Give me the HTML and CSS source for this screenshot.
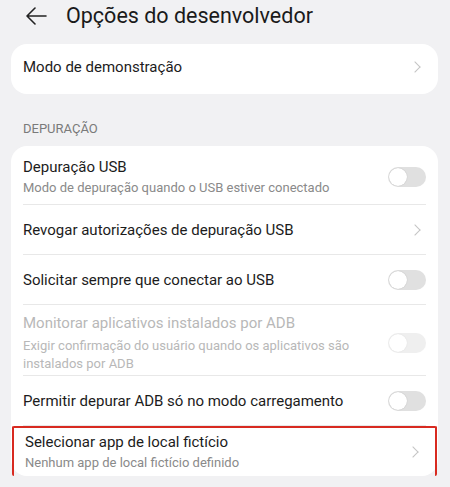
FILE: index.html
```html
<!DOCTYPE html>
<html lang="pt">
<head>
    <meta charset="UTF-8">
    <meta name="viewport" content="width=device-width, initial-scale=1.0">
    <title>Opções do desenvolvedor</title>
    <link rel="stylesheet" href="styles.css">
</head>
<body>
    <div class="top-bar">
        <svg class="back" width="22" height="18" viewBox="0 0 22 18">
            <path d="M21 9H2M10 1L2 9l8 8" fill="none" stroke="#222" stroke-width="1.6" stroke-linecap="round" stroke-linejoin="round"/>
        </svg>
        <h1>Opções do desenvolvedor</h1>
    </div>

    <div class="card">
        <div class="row single demo">
            <div class="text"><p class="title">Modo de demonstração</p></div>
            <span class="chevron"></span>
        </div>
    </div>

    <div class="section-label">DEPURAÇÃO</div>

    <div class="card">
        <div class="row">
            <div class="text">
                <p class="title">Depuração USB</p>
                <p class="sub">Modo de depuração quando o USB estiver conectado</p>
            </div>
            <span class="switch"></span>
        </div>
        <div class="row single">
            <div class="text"><p class="title">Revogar autorizações de depuração USB</p></div>
            <span class="chevron"></span>
        </div>
        <div class="row single">
            <div class="text"><p class="title">Solicitar sempre que conectar ao USB</p></div>
            <span class="switch"></span>
        </div>
        <div class="row disabled">
            <div class="text">
                <p class="title">Monitorar aplicativos instalados por ADB</p>
                <p class="sub">Exigir confirmação do usuário quando os aplicativos são instalados por ADB</p>
            </div>
            <span class="switch"></span>
        </div>
        <div class="row single">
            <div class="text"><p class="title">Permitir depurar ADB só no modo carregamento</p></div>
            <span class="switch"></span>
        </div>
        <div class="row marked">
            <div class="text">
                <p class="title">Selecionar app de local fictício</p>
                <p class="sub">Nenhum app de local fictício definido</p>
            </div>
            <span class="chevron"></span>
        </div>
    </div>
</body>
</html>
```
FILE: styles.css
```css
body {
    margin: 0;
    padding: 0 12px 0 11px;
    background: #f1f1f3;
    font-family: Roboto, "Noto Sans", sans-serif;
    color: #1c1c1c;
    overflow: hidden;
}

p {
    margin: 0;
}

.top-bar {
    display: flex;
    align-items: center;
    height: 30px;
    margin-bottom: 14px;
}

.back {
    margin-left: 14px;
    margin-top: 1px;
}

.top-bar h1 {
    margin: 0 0 0 19px;
    font-size: 21.5px;
    font-weight: 400;
    color: #1a1a1a;
}

.card {
    background: #fff;
    border-radius: 16px;
}

.section-label {
    padding: 26px 0 8px 12px;
    font-size: 13px;
    line-height: 18px;
    color: #7a7a7a;
}

.row {
    display: flex;
    align-items: center;
    margin: 0 12px;
    padding: 11px 0 7px;
    border-bottom: 1px solid #e8e8e8;
}

.row:last-child {
    border-bottom: none;
}

.row.single {
    height: 50px;
    padding: 0;
    box-sizing: border-box;
}

.row.demo {
    padding-bottom: 4px;
}

.text {
    flex: 1;
    padding-right: 28px;
}

.title {
    font-size: 15px;
    line-height: 20px;
}

.sub {
    margin-top: 2px;
    font-size: 13px;
    line-height: 18px;
    color: #8a8a8a;
}

.disabled {
    padding: 8px 0 2px;
}

.disabled .title,
.disabled .sub {
    color: #b8b8b8;
}

.disabled .sub {
    margin-top: 4px;
}

.disabled .switch {
    opacity: 0.5;
}

/* toggle off: grey track with white knob on the left */
.switch {
    position: relative;
    flex: none;
    width: 38px;
    height: 20px;
    border-radius: 10px;
    background: #e0e0e0;
}

.switch::after {
    content: "";
    position: absolute;
    top: 1px;
    left: 1px;
    width: 18px;
    height: 18px;
    border-radius: 50%;
    background: #fff;
    box-shadow: 0 0 1px rgba(0, 0, 0, 0.25);
}

.chevron {
    flex: none;
    width: 7px;
    height: 7px;
    margin-right: 7px;
    border-top: 1.3px solid #c4c4c4;
    border-right: 1.3px solid #c4c4c4;
    transform: rotate(45deg);
}

.marked {
    margin: 0 1px;
    padding: 4px 11px 4px;
    border: 2px solid #d82a20;
    border-radius: 2px;
}
```
